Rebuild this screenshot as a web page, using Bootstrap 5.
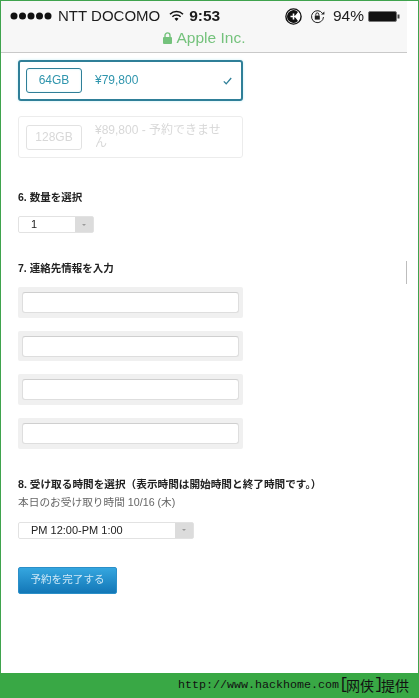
<!DOCTYPE html>
<html lang="ja">
<head>
    <meta charset="UTF-8">
    <meta name="viewport" content="width=device-width, initial-scale=1">
    <title>Apple Inc.</title>
    <link rel="stylesheet" href="https://cdn.jsdelivr.net/npm/bootstrap@5.3.0/dist/css/bootstrap.min.css">
    <style>
        html, body { height: 698px; overflow: hidden; }
        body { font-family: "Liberation Sans", "Noto Sans CJK JP", sans-serif; font-size: 10.5px; color: #222; }
        .shot { height: 698px; border: solid #3fa34d; border-width: 1px 1px 0 1px; position: relative; }
        .top-bar { width: 406px; height: 52px; background: #f7f7f7; border-bottom: 1px solid #c9c9c9; }
        .status-row { height: 27px; padding: 3px 7px 0 9px; font-size: 15px; color: #1c1c1c; filter: blur(.3px); }
        .carrier { margin-left: 5px; }
        .wifi-mark { margin-left: 9px; }
        .clock { font-weight: 700; margin-left: 5px; font-size: 15.5px; }
        .batt-level { font-size: 15.5px; }
        .site-row { font-size: 15.5px; color: #74c27c; height: 20px; gap: 5px; filter: blur(.3px); }
        .page-body { padding: 7px 0 0 17px; filter: blur(.3px); }
        .plan-box { width: 225px; height: 42px; border: 1px solid #ececec; border-radius: 3px; padding: 0 9px 0 7px; font-size: 12px; line-height: 13px; color: #d8d8d8; }
        .plan-box.picked { height: 41px; border: 2px solid #2f7f98; padding-left: 6px; color: #2f95ad; box-shadow: 0 0 3px #c5eef5; }
        .plan-text { max-width: 130px; }
        .plan-size { flex: 0 0 56px; height: 25px; margin-right: 13px; border: 1px solid #e2e2e2; border-radius: 3px; }
        .picked .plan-size { border: 1px solid #2f7f98; box-shadow: inset 0 0 2px #c5eef5; }
        .plan-gap { height: 15px; }
        .step-title { font-size: 10.5px; font-weight: 700; line-height: 14px; margin: 0; color: #222; }
        .step-six { margin-top: 32px; }
        .step-seven { margin-top: 28px; margin-bottom: 12px; }
        .step-eight { margin-top: 28px; font-size: 10.65px; }
        .pick-box { height: 17px; border: 1px solid #e2e2e2; border-radius: 2px; font-size: 11px; color: #222; }
        .pick-short { width: 76px; margin-top: 12px; }
        .pick-long { width: 176px; }
        .pick-label { padding-left: 12px; }
        .pick-arrow { width: 18px; background: #dcdcdc; }
        .pick-arrow::after { content: ""; border: 2px solid transparent; border-top: 2.5px solid #9a9a9a; margin-top: 2px; }
        .field-wrap { width: 225px; height: 30.67px; padding: 5px 4px; background: #f0f0f0; border-radius: 2px; margin-bottom: 13px; }
        .field-wrap .form-control { height: 21px; min-height: 0; padding: 0 4px; border: 1px solid #dedede; border-top-color: #cfcfcf; border-radius: 3px; }
        .note-line { color: #666; font-size: 10.7px; line-height: 14px; margin: 4px 0 13px; }
        .send-btn { width: 99px; height: 27px; margin-top: 28px; padding: 0; font-size: 10.6px; color: #cfe9f7; background: linear-gradient(#35a6df, #1377b7); border: 1px solid #2b8fc8; border-radius: 2px; }
        .scroll-mark { position: absolute; left: 405px; top: 260px; width: 1px; height: 23px; background: #bdbdbd; }
        .credit { position: absolute; left: -1px; right: -1px; top: 672px; height: 25px; background: #39a845; color: #111; font-family: "Liberation Mono", "Noto Sans CJK SC", monospace; font-size: 11.67px; padding-right: 10px; }
        .credit-cjk { font-size: 14px; font-family: "Noto Sans CJK SC", sans-serif; }
        .credit-brk { font-size: 16px; font-weight: 300; letter-spacing: -2.6px; margin-top: -1px; }
    </style>
</head>
<body>
    <div class="shot">
        <div class="top-bar">
            <div class="status-row d-flex align-items-center">
                <svg width="43" height="8" viewBox="0 0 43 8"><g fill="#111"><circle cx="4" cy="4" r="3.5"/><circle cx="12.5" cy="4" r="3.5"/><circle cx="21" cy="4" r="3.5"/><circle cx="29.5" cy="4" r="3.5"/><circle cx="38" cy="4" r="3.5"/></g></svg>
                <span class="carrier">NTT DOCOMO</span>
                <svg class="wifi-mark" width="15" height="12" viewBox="0 0 15 12"><g fill="none" stroke="#111" stroke-width="1.6"><path d="M1 4.2a9.2 9.2 0 0 1 13 0"/><path d="M3.4 6.7a5.8 5.8 0 0 1 8.2 0"/></g><path d="M5.5 8.8a2.8 2.8 0 0 1 4 0L7.5 11z" fill="#111"/></svg>
                <span class="clock">9:53</span>
                <svg class="ms-auto" width="17" height="17" viewBox="0 0 17 17"><circle cx="8.5" cy="8.5" r="7.6" fill="#fff" stroke="#111" stroke-width="1.4"/><path d="M2 8.5A6.5 6.5 0 0 1 13 4L9.5 8.5 13 13A6.5 6.5 0 0 1 2 8.5z" fill="#111"/><path d="M8.5 5.5v6M5.5 8.5h6" stroke="#fff" stroke-width="1.6"/></svg>
                <svg class="ms-2" width="15" height="15" viewBox="0 0 15 15"><path d="M12.6 4.5A6 6 0 1 0 13.5 8" fill="none" stroke="#222"/><path d="M11 5.5h3.4V2.6z" fill="#222"/><rect x="4.8" y="6.6" width="5" height="4" fill="#222"/><path d="M5.8 6.6V5.4a1.5 1.5 0 0 1 3 0v1.2" fill="none" stroke="#222"/></svg>
                <span class="batt-level ms-2">94%</span>
                <svg class="ms-1" width="32" height="11" viewBox="0 0 32 11"><rect x=".5" y=".5" width="28" height="10" rx="1.5" fill="#111" stroke="#777"/><rect x="29.5" y="3.5" width="2" height="4" fill="#444"/></svg>
            </div>
            <div class="site-row d-flex align-items-center justify-content-center">
                <svg width="9" height="12" viewBox="0 0 9 12"><rect y="5" width="9" height="7" rx="1" fill="#74c27c"/><path d="M2 5.5V3.4a2.5 2.5 0 0 1 5 0v2.1" fill="none" stroke="#74c27c" stroke-width="1.4"/></svg>
                <span>Apple Inc.</span>
            </div>
        </div>

        <div class="page-body">
            <div class="plan-box picked d-flex align-items-center">
                <div class="plan-size d-flex align-items-center justify-content-center">64GB</div>
                <div class="flex-grow-1">¥79,800</div>
                <svg width="9" height="8" viewBox="0 0 9 8"><path d="M.8 4.4 3.2 6.8 8.2 1" fill="none" stroke="#2f7f98" stroke-width="1.3"/></svg>
            </div>
            <div class="plan-gap"></div>
            <div class="plan-box d-flex align-items-center">
                <div class="plan-size d-flex align-items-center justify-content-center">128GB</div>
                <div class="plan-text">¥89,800 - 予約できません</div>
            </div>

            <h6 class="step-title step-six">6. 数量を選択</h6>
            <div class="pick-box pick-short d-flex">
                <div class="pick-label flex-grow-1 d-flex align-items-center">1</div>
                <div class="pick-arrow d-flex align-items-center justify-content-center"></div>
            </div>

            <h6 class="step-title step-seven">7. 連絡先情報を入力</h6>
            <div class="field-wrap"><input class="form-control" type="text"></div>
            <div class="field-wrap"><input class="form-control" type="text"></div>
            <div class="field-wrap"><input class="form-control" type="text"></div>
            <div class="field-wrap"><input class="form-control" type="text"></div>

            <h6 class="step-title step-eight">8. 受け取る時間を選択（表示時間は開始時間と終了時間です。）</h6>
            <p class="note-line">本日のお受け取り時間 10/16 (木)</p>
            <div class="pick-box pick-long d-flex">
                <div class="pick-label flex-grow-1 d-flex align-items-center">PM 12:00-PM 1:00</div>
                <div class="pick-arrow d-flex align-items-center justify-content-center"></div>
            </div>

            <button class="btn send-btn" type="button">予約を完了する</button>
        </div>

        <div class="scroll-mark"></div>
        <div class="credit d-flex align-items-center justify-content-end">http://www.hackhome.com<span class="credit-brk">[</span><span class="credit-cjk">网侠</span><span class="credit-brk">]</span><span class="credit-cjk">提供</span></div>
    </div>
    <script src="https://cdn.jsdelivr.net/npm/bootstrap@5.3.0/dist/js/bootstrap.bundle.min.js"></script>
</body>
</html>
